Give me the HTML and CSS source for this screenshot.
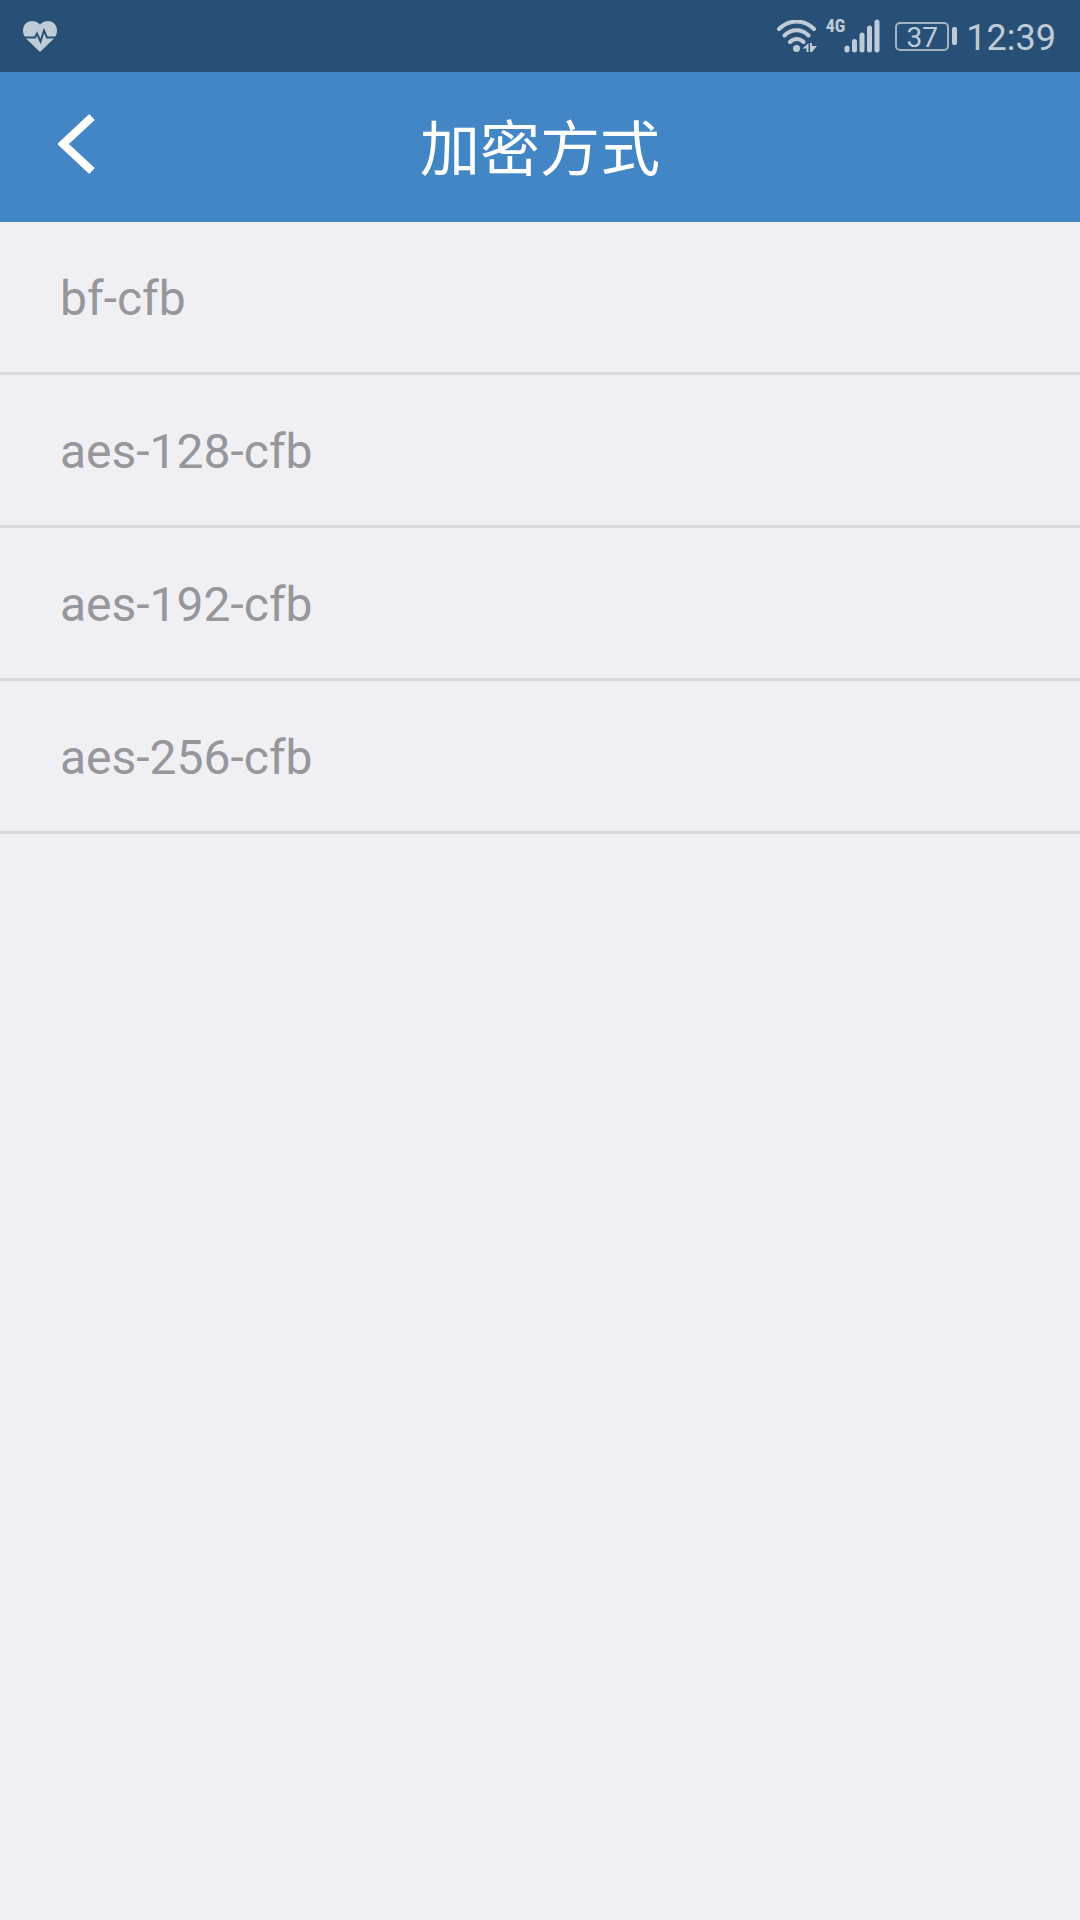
FILE: index.html
```html
<!DOCTYPE html>
<html lang="zh-CN">
<head>
<meta charset="utf-8">
<meta name="viewport" content="width=device-width, initial-scale=1">
<title>加密方式</title>
<link rel="stylesheet" href="styles.css">
</head>
<body>
<div class="status-bar">
  <svg class="heart" viewBox="0 0 34 31" width="34" height="31" aria-hidden="true">
    <path class="fill" d="M17 3.500C19.500 1 22 0 25 0c5 0 9 4 9 9.500 0 3-1 5.500-3 8L17 31 3 17.500C1 15 0 12.500 0 9.500 0 4 4 0 9 0c3 0 5.500 1 8 3.500z"/>
    <path class="pulse" d="M0 16.500h12l2-4 3.500 8 3.500-11 3 7h10"/>
  </svg>
  <div class="status-right">
    <svg class="wifi" viewBox="0 0 40 33" width="40" height="33" aria-hidden="true">
      <path class="arc" d="M2 9C12-1 27-1 37 9M7.500 15.500c7-7 17-7 24 0M13 22c4-4 9.500-4 13.500 0"/>
      <circle class="fill" cx="19.500" cy="28.500" r="3.500"/>
      <path class="fill" d="M25.500 28.500 31.500 23v9h-2v-3.500zM33 23l2 0v3h5l-5 6h-2z"/>
    </svg>
    <span class="network">4G</span>
    <svg class="signal" viewBox="0 0 36 34" width="36" height="34" aria-hidden="true">
      <path class="bars" d="M3 29v2M10.500 22.500v8.500M18 16v15M25.500 9v22M33 3v28"/>
    </svg>
    <div class="battery"><span class="level">37</span><span class="cap"></span></div>
    <time class="clock">12:39</time>
  </div>
</div>
<header class="header">
  <button class="back" type="button" aria-label="返回">
    <svg viewBox="0 0 38 60" width="38" height="60" aria-hidden="true"><path d="M34 3 5 30l29 27"/></svg>
  </button>
  <h1 class="title">加密方式</h1>
</header>
<main>
  <ul class="list">
    <li><button class="option" type="button">bf-cfb</button></li>
    <li><button class="option" type="button">aes-128-cfb</button></li>
    <li><button class="option" type="button">aes-192-cfb</button></li>
    <li><button class="option" type="button">aes-256-cfb</button></li>
  </ul>
</main>
</body>
</html>
```
FILE: styles.css
```css
* {
  box-sizing: border-box;
}

body {
  margin: 0;
  min-height: 100vh;
  background: #efeff4;
  font-family: Roboto, "Noto Sans CJK SC", sans-serif;
}

svg {
  display: block;
}

.status-bar {
  display: flex;
  align-items: center;
  justify-content: space-between;
  height: 72px;
  padding: 0 24px 0 23px;
  background: #285076;
  color: #bfcbd7;
}

.status-bar .fill {
  fill: #bfcbd7;
}

.pulse {
  fill: none;
  stroke: #285076;
  stroke-width: 2;
}

.status-right {
  display: flex;
  align-items: center;
}

.arc,
.bars {
  fill: none;
  stroke: #bfcbd7;
  stroke-width: 4;
  stroke-linecap: round;
}

.bars {
  stroke-width: 5;
}

.network {
  align-self: flex-start;
  margin: 2px -1px 0 9px;
  font: bold 18px/20px "Roboto Condensed", "Liberation Sans Narrow", Roboto, sans-serif;
}

.battery {
  display: flex;
  align-items: center;
  gap: 3px;
  margin: 0 9px 0 15px;
}

.level {
  width: 54px;
  height: 29px;
  border: 2px solid #a3b3c4;
  border-radius: 5px;
  font-size: 28px;
  line-height: 27px;
  text-align: center;
}

.cap {
  width: 5px;
  height: 18px;
  border-radius: 2px;
  background: #bfcbd7;
}

.clock {
  padding-top: 3px;
  font-size: 36px;
  line-height: 42px;
}

.header {
  display: grid;
  grid-template-columns: 150px 1fr 150px;
  align-items: center;
  height: 150px;
  background: #4286c5;
  color: #fff;
}

.back {
  height: 150px;
  padding: 0 0 6px 58px;
  border: 0;
  background: none;
}

.back path {
  fill: none;
  stroke: #fff;
  stroke-width: 8;
}

.title {
  margin: 0;
  padding-top: 8px;
  font-size: 60px;
  font-weight: 400;
  line-height: 88px;
  text-align: center;
}

.list {
  margin: 0;
  padding: 0;
  list-style: none;
}

.option {
  display: block;
  width: 100%;
  height: 153px;
  padding: 3px 60px 0;
  border: 0;
  border-bottom: 3px solid #d9d9dc;
  background: none;
  color: #97969b;
  font: 48px/56px Roboto, sans-serif;
  text-align: left;
}
```
